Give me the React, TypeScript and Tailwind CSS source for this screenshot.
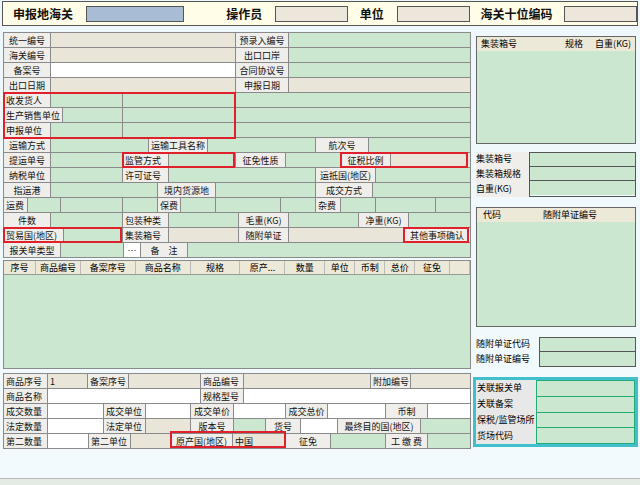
import React from "react";

type C = [number, string, string?];
const cls: Record<string, string> = {
  L: "bg-[#efeeea] justify-center",
  l: "bg-[#efeeea] justify-start pl-[2px]",
  G: "bg-[#cbe7cf]",
  W: "bg-white justify-center",
  B: "bg-[#e9e5d8]",
  T: "bg-[#e9e5d8] justify-start pl-[2px]",
};

function Row({ cells, h = 15 }: { cells: C[]; h?: number }) {
  return (
    <div className="flex">
      {cells.map(([w, k, t], i) => (
        <div
          key={i}
          style={{ width: w, height: h }}
          className={`flex items-center shrink-0 border-r border-b border-[#8a8a8a] text-[9px] leading-none whitespace-nowrap overflow-hidden text-[#111] ${cls[k]}`}
        >
          {t}
        </div>
      ))}
    </div>
  );
}

const Red = ({ x, y, w, h }: { x: number; y: number; w: number; h: number }) => (
  <div className="absolute border-2 border-[#e0202a] pointer-events-none" style={{ left: x, top: y, width: w, height: h }} />
);

export default function App() {
  const top: C[][] = [
    [[47, "L", "统一编号"], [185, "B"], [53, "L", "预录入编号"], [182, "G"]],
    [[47, "L", "海关编号"], [185, "B"], [53, "L", "出口口岸"], [182, "G"]],
    [[47, "L", "备案号"], [185, "W"], [53, "L", "合同协议号"], [182, "G"]],
    [[47, "L", "出口日期"], [185, "B"], [53, "L", "申报日期"], [182, "B"]],
    [[47, "l", "收发货人"], [72, "G"], [113, "G"], [235, "G"]],
    [[59, "l", "生产销售单位"], [60, "G"], [113, "G"], [235, "G"]],
    [[47, "l", "申报单位"], [72, "G"], [113, "G"], [235, "G"]],
    [[47, "L", "运输方式"], [98, "G"], [59, "L", "运输工具名称"], [108, "G"], [53, "L", "航次号"], [102, "G"]],
    [[47, "L", "提运单号"], [72, "G"], [46, "l", "监管方式"], [67, "G"], [50, "L", "征免性质"], [55, "G"], [50, "L", "征税比例"], [80, "B"]],
    [[47, "L", "纳税单位"], [72, "G"], [46, "l", "许可证号"], [147, "G"], [60, "L", "运抵国(地区)"], [95, "G"]],
    [[47, "L", "指运港"], [107, "G"], [58, "L", "境内货源地"], [100, "G"], [57, "L", "成交方式"], [98, "G"]],
    [[24, "l", "运费"], [33, "G"], [62, "G"], [35, "G"], [23, "l", "保费"], [35, "G"], [65, "G"], [35, "G"], [25, "l", "杂费"], [35, "G"], [60, "G"], [35, "G"]],
    [[47, "L", "件数"], [72, "G"], [46, "l", "包装种类"], [70, "G"], [50, "L", "毛重(KG)"], [70, "G"], [50, "L", "净重(KG)"], [62, "G"]],
    [[60, "l", "贸易国(地区)"], [59, "G"], [46, "l", "集装箱号"], [70, "B"], [50, "L", "随附单证"], [115, "B"], [67, "L", "其他事项确认"]],
    [[57, "L", "报关单类型"], [63, "G"], [17, "W", "…"], [47, "L", "备　注"], [283, "G"]],
  ];
  const bottom: C[][] = [
    [[44, "l", "商品序号"], [40, "T", "1"], [41, "l", "备案序号"], [72, "B"], [43, "l", "商品编号"], [127, "B"], [40, "l", "附加编号"], [60, "B"]],
    [[44, "l", "商品名称"], [153, "W"], [43, "l", "规格型号"], [227, "W"]],
    [[44, "l", "成交数量"], [56, "W"], [42, "l", "成交单位"], [45, "W"], [43, "L", "成交单价"], [52, "W"], [42, "L", "成交总价"], [58, "W"], [42, "L", "币制"], [43, "W"]],
    [[44, "l", "法定数量"], [56, "W"], [42, "l", "法定单位"], [45, "B"], [43, "L", "版本号"], [32, "G"], [35, "L", "货号"], [37, "W"], [83, "L", "最终目的国(地区)"], [50, "G"]],
    [[44, "l", "第二数量"], [41, "W"], [42, "l", "第二单位"], [40, "B"], [62, "L", "原产国(地区)"], [53, "T", "中国"], [45, "L", "征免"], [55, "G"], [42, "L", "工 缴 费"], [43, "G"]],
  ];
  const heads = [["序号", 32], ["商品编号", 45], ["备案序号", 55], ["商品名称", 55], ["规格", 50], ["原产...", 45], ["数量", 40], ["单位", 30], ["币制", 30], ["总价", 30], ["征免", 35], ["", 20]] as [string, number][];
  return (
    <div className="relative w-[640px] h-[485px] overflow-hidden bg-gradient-to-b from-[#eef8fc] to-[#f2fafd]" style={{ fontFamily: '"Noto Sans CJK SC", sans-serif' }}>
      <div className="h-[25px] mx-[2px] mt-[1px] border border-[#555] bg-[#fffde8] flex items-center text-[12px] font-bold text-[#111]">
        <span className="ml-[10px] w-[75px]">申报地海关</span>
        <div className="w-[100px] h-[16px] bg-[#a9bcd5] border border-[#555]" />
        <span className="ml-[42px] w-[50px]">操作员</span>
        <div className="w-[74px] h-[16px] bg-[#ede6da] border border-[#555]" />
        <span className="ml-[12px] w-[38px]">单位</span>
        <div className="w-[75px] h-[16px] bg-[#ede6da] border border-[#555]" />
        <span className="ml-[10px] w-[85px]">海关十位编码</span>
        <div className="w-[75px] h-[16px] bg-[#ede6da] border border-[#555]" />
      </div>
      <div className="flex mt-[6px] ml-[3px] gap-[5px]">
        <div className="w-[468px]">
          <div className="border-l border-t border-[#8a8a8a]">
            {top.map((r, i) => <Row key={i} cells={r} />)}
          </div>
          <div className="mt-[2px] border border-[#8a8a8a] bg-[#cbe7cf]">
            <div className="flex h-[14px] bg-[#ece9d8] border-b border-[#999]">
              {heads.map(([t, w], i) => (
                <div key={i} style={{ width: w }} className="text-[9px] flex items-center justify-center border-r border-[#bbb]">{t}</div>
              ))}
            </div>
            <div className="h-[93px]" />
          </div>
          <div className="mt-[4px] border-l border-t border-[#8a8a8a]">
            {bottom.map((r, i) => <Row key={i} cells={r} />)}
          </div>
        </div>
        <div className="w-[160px] flex flex-col text-[9px]">
          <div className="h-[108px] border border-[#666] bg-[#cbe7cf] mt-[4px]">
            <div className="h-[14px] bg-[#ece9d8] flex items-center px-[4px]"><span className="flex-1">集装箱号</span><span className="w-[30px]">规格</span><span>自重(KG)</span></div>
          </div>
          <div className="flex mt-[8px]">
            <div className="w-[53px] flex flex-col bg-[#efeeea]"><span className="h-[15px]">集装箱号</span><span className="h-[15px]">集装箱规格</span><span className="h-[15px]">自重(KG)</span></div>
            <div className="flex-1 border border-[#555]">{[0, 1, 2].map(i => <div key={i} className="h-[14px] bg-[#cbe7cf] border-b border-[#555] last:border-b-0" />)}</div>
          </div>
          <div className="h-[120px] border border-[#666] bg-[#cbe7cf] mt-[10px]">
            <div className="h-[14px] bg-[#ece9d8] flex items-center px-[6px]"><span className="w-[60px]">代码</span><span>随附单证编号</span></div>
          </div>
          <div className="flex mt-[10px]">
            <div className="w-[63px] flex flex-col"><span className="h-[15px]">随附单证代码</span><span className="h-[15px]">随附单证编号</span></div>
            <div className="flex-1 border border-[#555]">{[0, 1].map(i => <div key={i} className="h-[14px] bg-[#cbe7cf] border-b border-[#555] last:border-b-0" />)}</div>
          </div>
          <div className="mt-[10px] -ml-[3px] w-[165px] h-[70px] bg-[#40c0cc] p-[3px] flex">
            <div className="w-[60px] bg-[#e8e8e8] flex flex-col justify-around pl-[1px]"><span>关联报关单</span><span>关联备案</span><span>保税/监管场所</span><span>货场代码</span></div>
            <div className="flex-1 flex flex-col border border-[#2a7]">{[0, 1, 2, 3].map(i => <div key={i} className="flex-1 bg-[#cbe7cf] border-b border-[#2a7] last:border-b-0" />)}</div>
          </div>
        </div>
      </div>
      <div className="absolute left-0 right-0 top-[478px] h-[7px] bg-[#e4ebe4] border-t border-[#bbb]" />
      <Red x={3} y={92} w={233} h={47} />
      <Red x={122} y={152} w={113} h={16} />
      <Red x={340} y={152} w={128} h={16} />
      <Red x={3} y={227} w={119} h={16} />
      <Red x={403} y={227} w={66} h={16} />
      <Red x={170} y={431} w={116} h={17} />
    </div>
  );
}
